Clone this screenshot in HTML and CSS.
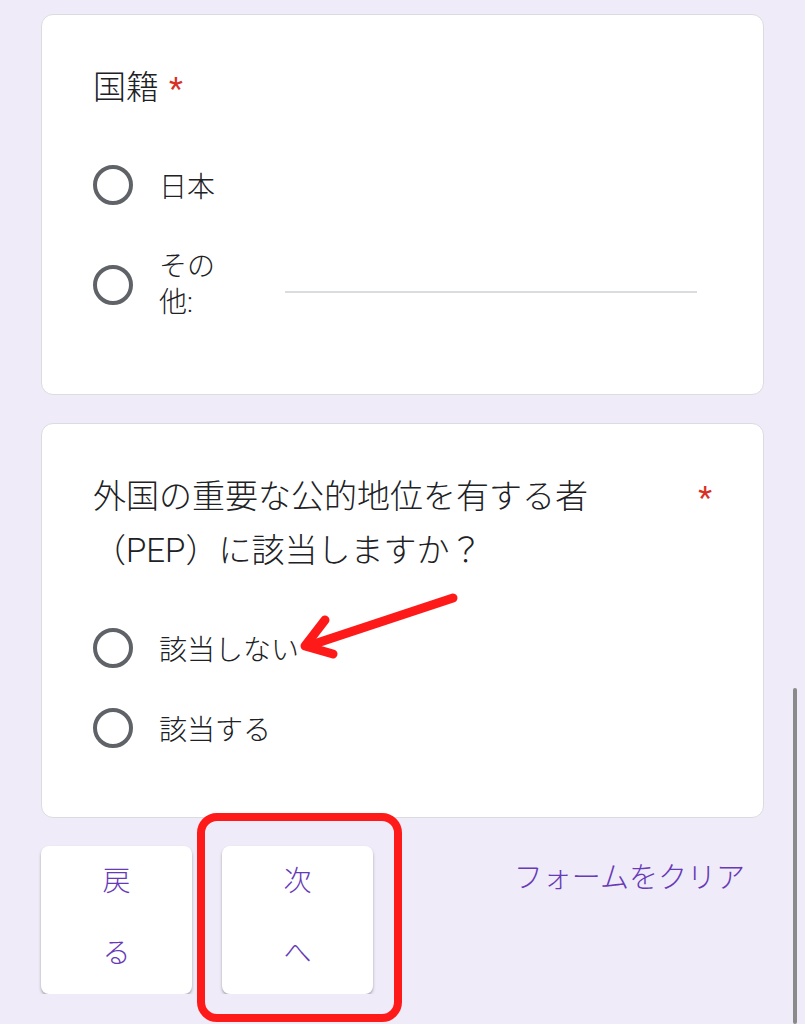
FILE: index.html
```html
<!DOCTYPE html>
<html>
  <head>
    <meta name="viewport" content="width=device-width, initial-scale=1.0">
    <title>フォーム</title>
    <link rel="stylesheet" href="styles.css">
  </head>
  <body>
    <div class="form">
      <!-- 国籍 -->
      <div class="card">
        <div class="q-title">
          <span class="q-text">国籍</span>
          <span class="req">*</span>
        </div>
        <div class="options">
          <label class="option">
            <span class="radio"></span>
            <span class="opt-text">日本</span>
          </label>
          <label class="option option-other">
            <span class="radio"></span>
            <span class="opt-text other-label">その他:</span>
            <span class="other-line"></span>
          </label>
        </div>
      </div>

      <!-- PEP -->
      <div class="card">
        <div class="q-title">
          <span class="q-text">外国の重要な公的地位を有する者（PEP）に該当しますか？</span>
          <span class="req">*</span>
        </div>
        <div class="options">
          <label class="option">
            <span class="radio"></span>
            <span class="opt-text">該当しない</span>
          </label>
          <label class="option">
            <span class="radio"></span>
            <span class="opt-text">該当する</span>
          </label>
        </div>
      </div>

      <!-- Navigation -->
      <div class="nav">
        <div class="btn">戻る</div>
        <div class="btn">次へ</div>
        <div class="clear">フォームをクリア</div>
      </div>
    </div>

    <!-- Annotation marks -->
    <svg class="markup" width="805" height="1024" viewBox="0 0 805 1024">
      <g fill="none" stroke="#ff1a1a" stroke-linecap="round" stroke-linejoin="round">
        <line x1="453" y1="598" x2="308" y2="646" stroke-width="9"/>
        <polyline points="325,620 305,646 333,654" stroke-width="9"/>
        <rect x="201" y="817" width="197" height="201" rx="16" stroke-width="8"/>
      </g>
    </svg>
    <div class="scrollbar"></div>
  </body>
</html>
```

FILE: styles.css
```css
body {
  margin: 0px;
  background-color: #f0ebf8;
  font-family: Roboto, "Noto Sans CJK JP", sans-serif;
  font-weight: 300;
  color: #202124;
}

.form {
  padding-top: 14px;
}

.card {
  background-color: white;
  border: 1px solid #dadce0;
  border-radius: 12px;
  margin: 0px 41px 28px;
  padding: 46px 51px 49px;
}

.q-title {
  display: flex;
  align-items: flex-start;
  font-size: 33px;
  line-height: 54px;
}

.req {
  color: #d93025;
  margin-left: 10px;
  font-size: 32px;
  font-weight: 400;
}

.options {
  margin-top: 30px;
}

.option {
  display: flex;
  align-items: center;
  height: 80px;
  font-size: 28px;
}

.option-other {
  height: 120px;
  line-height: 36px;
}

.radio {
  flex: none;
  box-sizing: border-box;
  width: 40px;
  height: 40px;
  border: 4px solid #5f6368;
  border-radius: 50%;
  margin-right: 26px;
}

.other-label {
  width: 60px;
}

.other-line {
  flex: 1;
  height: 0px;
  border-bottom: 2px solid #dadce0;
  margin: 14px 15px 0px 66px;
}

.nav {
  display: flex;
  align-items: flex-start;
  gap: 30px;
  margin: 0px 41px;
  color: #673ab7;
  font-size: 28px;
}

.btn {
  box-sizing: border-box;
  width: 151px;
  height: 148px;
  padding: 0px 50px;
  background-color: white;
  border-radius: 8px;
  box-shadow: 0px 2px 3px rgba(0, 0, 0, 0.3);
  line-height: 72px;
  text-align: center;
}

.clear {
  margin-left: auto;
  margin-right: 19px;
  font-size: 29px;
  line-height: 64px;
}

.markup {
  position: absolute;
  top: 0px;
  left: 0px;
  pointer-events: none;
}

.scrollbar {
  position: absolute;
  left: 793px;
  top: 688px;
  width: 4px;
  height: 336px;
  border-radius: 2px;
  background-color: #8a8a8a;
}
```
